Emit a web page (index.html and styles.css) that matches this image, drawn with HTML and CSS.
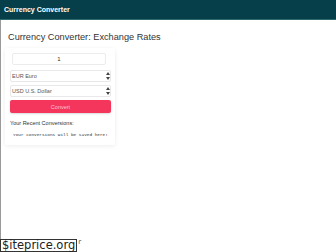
FILE: index.html
```html
<!DOCTYPE html>
<html lang="en">
<head>
    <meta charset="UTF-8">
    <meta name="viewport" content="width=device-width, initial-scale=1.0">
    <title>Currency Converter</title>
    <link rel="stylesheet" href="styles.css">
</head>
<body>
    <header class="topbar">Currency Converter</header>
    <main class="page">
        <h1>Currency Converter: Exchange Rates</h1>
        <div class="card">
            <input type="text" class="amount" value="1">
            <div class="select">EUR Euro
                <svg class="arrows" viewBox="0 0 4 8" width="4" height="8"><path d="M0 3L2 0L4 3Z M0 5L2 8L4 5Z" fill="#444"/></svg>
            </div>
            <div class="select">USD U.S. Dollar
                <svg class="arrows" viewBox="0 0 4 8" width="4" height="8"><path d="M0 3L2 0L4 3Z M0 5L2 8L4 5Z" fill="#444"/></svg>
            </div>
            <button type="button" class="convert">Convert</button>
            <p class="recent">Your Recent Conversions:</p>
            <pre class="saved">Your conversions will be saved here!</pre>
        </div>
    </main>
    <div class="mark"><span class="mark-box">$iteprice.org</span><span class="mark-r">r</span></div>
</body>
</html>
```

FILE: styles.css
```css
body {
    margin: 0;
    font-family: "Liberation Sans", Arial, sans-serif;
    color: #333;
    background: #fff;
    height: 252px;
    overflow: hidden;
    position: relative;
}

.topbar {
    background: #063f49;
    border-bottom: 1px solid #2e6b6f;
    color: #fff;
    font-weight: bold;
    font-size: 7px;
    height: 19px;
    line-height: 19px;
    padding-left: 4px;
}

.page {
    border-left: 1px solid #9a9a9a;
    height: 228px;
    padding: 0 0 0 4px;
}

h1 {
    font-weight: normal;
    font-size: 9.2px;
    margin: 0;
    padding: 12px 0 0 3px;
    color: #333;
}

.card {
    width: 101px;
    margin-top: 6px;
    padding: 5px 4px 8px 5px;
    box-shadow: 0 1px 4px rgba(0, 0, 0, 0.08);
    border-radius: 2px;
}

.amount {
    display: block;
    box-sizing: border-box;
    width: 94px;
    height: 12px;
    margin: 0 0 5px 2px;
    border: 1px solid #ececec;
    border-radius: 2px;
    font-size: 6px;
    text-align: center;
    padding: 0;
    font-family: inherit;
    color: #333;
}

.select {
    position: relative;
    box-sizing: border-box;
    height: 12px;
    line-height: 10px;
    border: 1px solid #e8e8e8;
    border-radius: 2px;
    font-size: 5.5px;
    padding-left: 1px;
    margin-bottom: 3px;
    color: #555;
}

.arrows {
    position: absolute;
    right: 0;
    top: 1px;
}

.convert {
    display: block;
    width: 100%;
    height: 13px;
    border: none;
    border-radius: 2px;
    background: #f5365c;
    color: #fcc5d2;
    font-size: 5.5px;
    padding: 0;
    margin-top: 1px;
    box-shadow: 0 1px 2px rgba(0, 0, 0, 0.15);
}

.recent {
    font-size: 5.5px;
    margin: 7px 0 0 0;
    color: #333;
}

.saved {
    font-family: "Liberation Mono", monospace;
    font-size: 4.4px;
    margin: 6px 0 0 3px;
    color: #333;
}

.mark {
    position: absolute;
    left: 0;
    bottom: 0;
    display: flex;
    align-items: flex-start;
    font-family: "DejaVu Sans", sans-serif;
    line-height: 1;
}

.mark-box {
    background: #fff;
    border: 1px solid #333;
    padding: 0 1px;
    font-size: 11.5px;
    color: #222;
}

.mark-r {
    margin-left: 1px;
    font-size: 7px;
    color: #555;
}
```
